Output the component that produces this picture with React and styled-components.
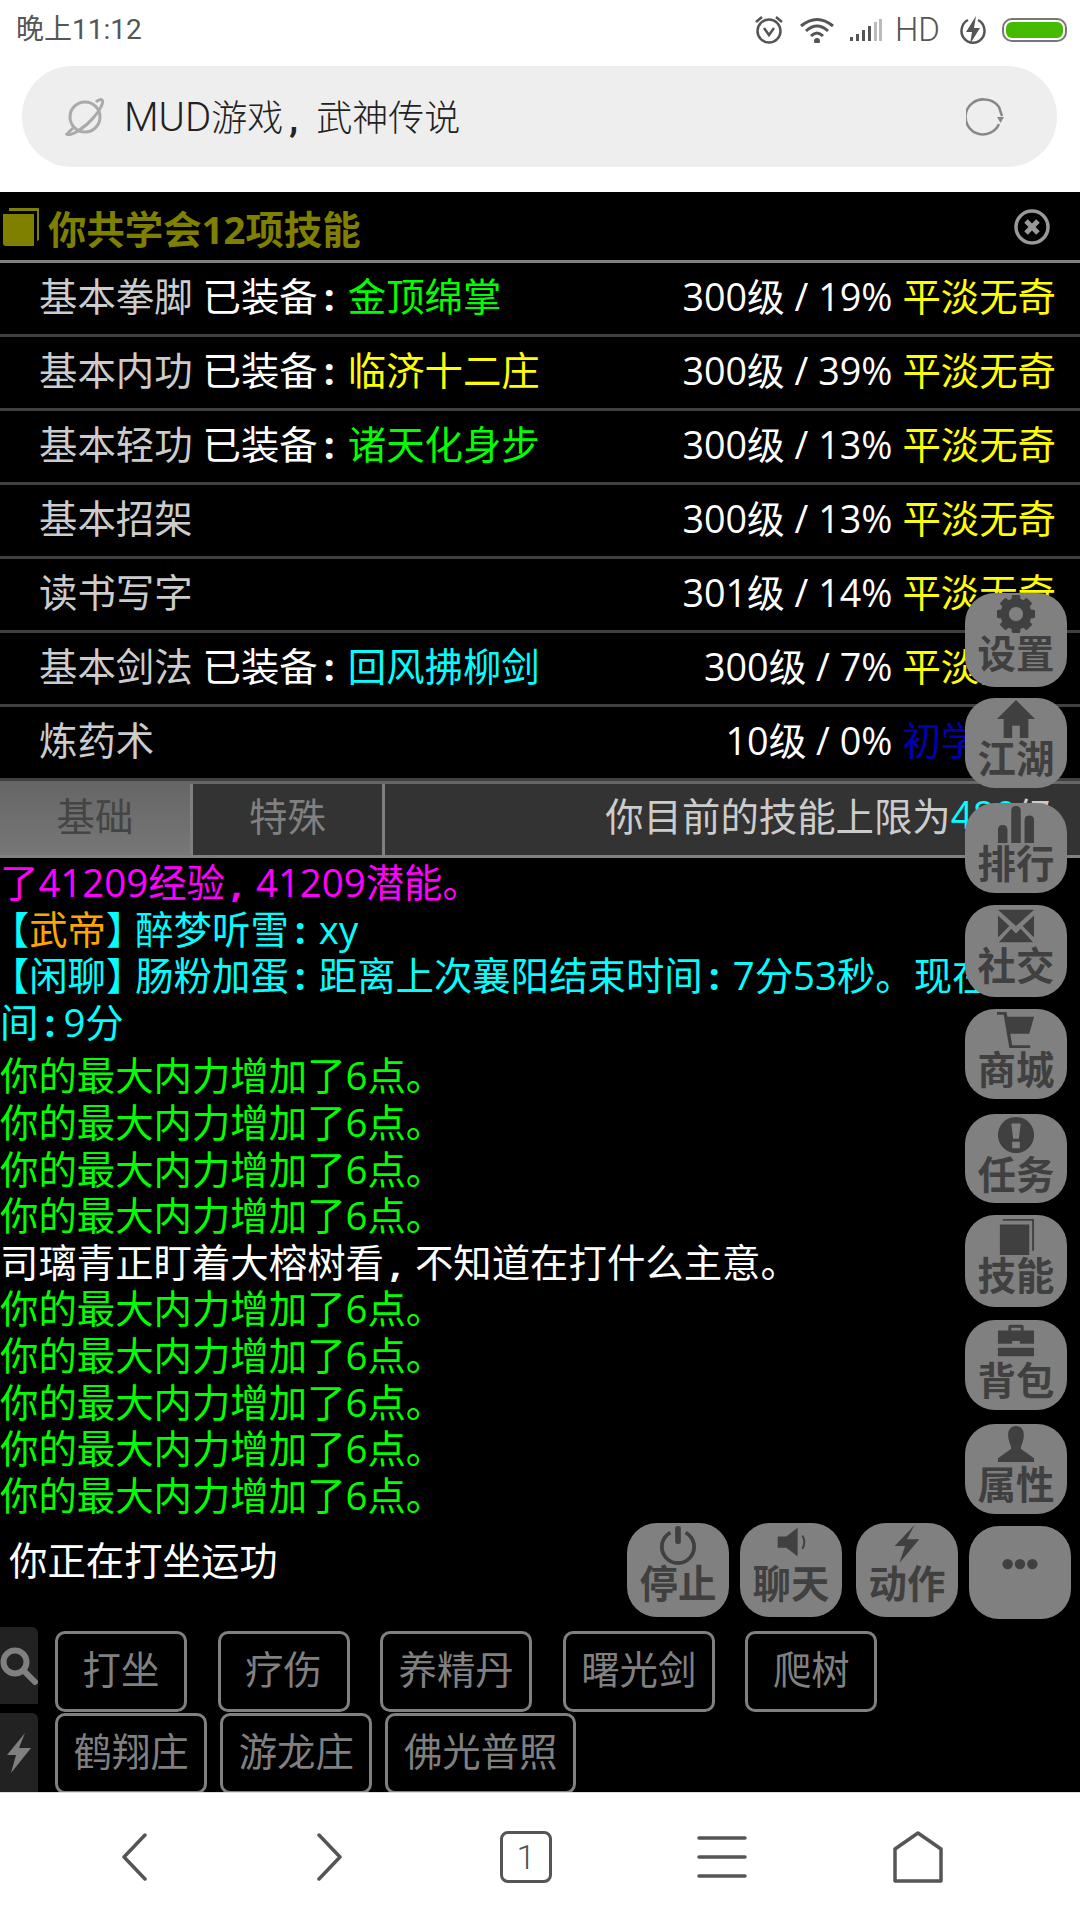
import React from 'react'
import styled, { createGlobalStyle } from 'styled-components'

const GlobalStyle = createGlobalStyle`
html, body {
  margin: 0;
  padding: 0;
  background: #fff;
}
* {
  box-sizing: border-box;
}
body {
  font-family: "Open Sans", "Noto Sans CJK SC", sans-serif;
}
`

const Page = styled.div`
width: 1080px;
height: 1920px;
display: flex;
flex-direction: column;
overflow: hidden;
`

const StatusBar = styled.div`
height: 66px;
display: flex;
align-items: center;
justify-content: space-between;
padding: 0 13px 7px 16px;
color: #555;
`
const Clock = styled.div`
font-family: Roboto, "Noto Sans CJK SC", sans-serif;
font-size: 28px;
font-weight: 400;
line-height: 54px;
`
const StatusIcons = styled.div`
display: flex;
align-items: center;
gap: 15px;
`
const HdLabel = styled.div`
font-family: Roboto, sans-serif;
font-size: 33px;
font-weight: 300;
color: #555;
line-height: 40px;
margin: 0 4px 0 -2px;
`

const UrlWrap = styled.div`
height: 126px;
padding: 0 23px 25px 22px;
`
const UrlBar = styled.div`
height: 101px;
border-radius: 50px;
background: #eee;
display: flex;
align-items: center;
padding: 0 53px 0 43px;
`
const UrlText = styled.div`
flex: 1;
margin-left: 19px;
padding-bottom: 4px;
font-family: Roboto, "Noto Sans CJK SC", sans-serif;
font-size: 36px;
font-weight: 300;
color: #222;
`
const UrlLatin = styled.span`
font-size: 40px;
`

const Game = styled.div`
position: relative;
flex: 1;
background: #000;
overflow: hidden;
font-size: 38.4px;
color: #fff;
`

const Header = styled.div`
height: 71px;
border-bottom: 3px solid #808080;
display: flex;
align-items: center;
padding: 2px 30px 0 3px;
`
const Title = styled.div`
flex: 1;
margin-left: 9px;
color: #808000;
font-weight: 700;
white-space: nowrap;
`

const SkillRow = styled.div`
height: 74px;
border-bottom: 3px solid #404040;
display: flex;
align-items: center;
justify-content: space-between;
padding: 0 24px 9px 39px;
white-space: nowrap;
`
const SkillName = styled.span`
color: #ccc;
`
const Equipped = styled.span`
color: ${props => props.$color};
`
const StatText = styled.span`
font-size: 37.7px;
`
const Narrow = styled.span`
display: inline-block;
width: ${props => props.$w || 30}px;
padding-left: 6px;
font-weight: 700;
`

const TabBar = styled.div`
height: 77px;
border-top: 3px solid #666;
border-bottom: 3px solid #808080;
display: flex;
background: #333;
`
const Tab = styled.div`
width: ${props => props.$width}px;
border-right: 3px solid #808080;
display: flex;
align-items: center;
justify-content: center;
padding-bottom: 12px;
color: ${props => (props.$active ? '#444' : '#808080')};
background: ${props => (props.$active ? 'linear-gradient(#666, #777)' : '#333')};
`
const LimitText = styled.div`
flex: 1;
display: flex;
align-items: center;
justify-content: flex-end;
padding: 0 25px 12px 0;
color: #ccc;
white-space: pre;
`
const Cyan = styled.span`
color: #0ff;
`

const Log = styled.div`
height: 660px;
padding-top: 1px;
line-height: 46.6px;
`
const LogLine = styled.div`
color: ${props => props.$color};
margin-top: ${props => props.$gap || 0}px;
`
const Orange = styled.span`
color: #ffa500;
`
const Bracket = styled.span`
font-feature-settings: "halt";
margin-left: ${props => props.$left || 0}px;
margin-right: ${props => props.$right || 0}px;
`

const Working = styled.div`
height: 109px;
padding: 18px 0 0 9px;
line-height: 48px;
`

const Actions = styled.div`
display: flex;
height: ${props => props.$height}px;
overflow: hidden;
`
const SideTab = styled.div`
width: 38px;
height: ${props => props.$height}px;
flex-shrink: 0;
background: #222;
border-radius: 0 6px 0 0;
display: flex;
align-items: center;
justify-content: center;
`
const ActionList = styled.div`
display: flex;
margin-left: 17px;
gap: ${props => props.$gap}px;
padding-top: ${props => props.$top}px;
`
const ActionButton = styled.div`
min-width: 132px;
height: 81px;
padding: 0 15.5px 10px;
border: 3px solid #808080;
border-radius: 10px;
display: flex;
align-items: center;
justify-content: center;
color: #808080;
white-space: nowrap;
`

const SideMenu = styled.div`
position: absolute;
top: 401px;
right: 13px;
display: flex;
flex-direction: column;
`
const BottomMenu = styled.div`
position: absolute;
top: 1331px;
left: 627px;
display: flex;
align-items: flex-start;
`
const MenuButton = styled.div`
width: 102px;
height: ${props => props.$height}px;
margin-top: ${props => props.$top || 0}px;
margin-left: ${props => props.$left || 0}px;
background: #808080;
border-radius: 30px;
color: #404040;
padding-top: 2px;
display: flex;
flex-direction: column;
align-items: center;
font-size: 38.4px;
font-weight: 700;
line-height: 40px;
white-space: nowrap;
`
const MenuIcon = styled.svg`
width: 38px;
height: 38px;
flex-shrink: 0;
fill: currentColor;
overflow: visible;
`

const Nav = styled.div`
height: 128px;
border-top: 1px solid #ddd;
background: #fff;
display: grid;
grid-template-columns: repeat(5, 196px);
padding-left: 36px;
align-items: center;
justify-items: center;
`
const TabCount = styled.div`
width: 52px;
height: 52px;
border: 3px solid #555;
border-radius: 8px;
display: flex;
align-items: center;
justify-content: center;
font-family: Roboto, sans-serif;
font-weight: 300;
font-size: 34px;
color: #555;
`

const Cog = () => {
    const teeth = [0, 45, 90, 135, 180, 225, 270, 315]
    return (
        <MenuIcon viewBox="0 0 40 40">
            <circle cx="20" cy="20" r="12" fill="none" stroke="currentColor" strokeWidth="9" />
            {teeth.map(a => <rect key={a} x="15.5" y="0" width="9" height="9" rx="1.5" transform={`rotate(${a} 20 20)`} />)}
        </MenuIcon>
    )
}
const Home = () => (
    <MenuIcon viewBox="0 0 40 40">
        <path d="M20 0 40 20H33V40H24V27H16V40H7V20H0Z" />
    </MenuIcon>
)
const Bars = () => (
    <MenuIcon viewBox="0 0 40 40">
        <path d="M1 40V26q0-5 5-5t5 5V40ZM15 40V6q0-5 5-5t5 5V40ZM29 40V16q0-5 5-5t5 5V40Z" />
    </MenuIcon>
)
const Mail = () => (
    <MenuIcon viewBox="0 0 40 40">
        <path d="M1 3H39L20 20ZM1 9 13 20 1 32ZM39 9 27 20 39 32ZM2 37 15 23 20 28 25 23 38 37Z" />
    </MenuIcon>
)
const Cart = () => (
    <MenuIcon viewBox="0 0 40 40">
        <path d="M0 1H10L11 6H39L34 24H14L16 36H35V39H13L7 4H0Z" />
    </MenuIcon>
)
const Alert = () => (
    <MenuIcon viewBox="0 0 40 40">
        <path fillRule="evenodd" d="M20 1a19 19 0 1 0 .01 0ZM15 8H25L23 24H17ZM16 27H24V34H16Z" />
    </MenuIcon>
)
const Book = () => (
    <MenuIcon viewBox="0 0 40 40">
        <path d="M6 2H39V35L37 36V4H6ZM3 8H34V40H3Z" />
    </MenuIcon>
)
const Case = () => (
    <MenuIcon viewBox="0 0 40 40">
        <path fillRule="evenodd" d="M14 3H26Q28 3 28 5V9H39V23H24V20H16V23H1V9H12V5Q12 3 14 3ZM15 6V9H25V6ZM1 27H39V36H1Z" />
    </MenuIcon>
)
const User = () => (
    <MenuIcon viewBox="0 0 40 40">
        <path d="M20 0C27 0 29 6 28 13 27 18 25 21 25 24L39 34V38H1V34L15 24C15 21 13 18 12 13 11 6 13 0 20 0Z" />
    </MenuIcon>
)
const Power = () => (
    <MenuIcon viewBox="0 0 40 40">
        <path d="M12 8A17 17 0 1 0 28 8" fill="none" stroke="currentColor" strokeWidth="4" />
        <rect x="17" y="1" width="6" height="19" rx="2.5" />
    </MenuIcon>
)
const Sound = () => (
    <MenuIcon viewBox="0 0 40 40">
        <path d="M6 12H15L27 3V33L15 24H6Z" />
        <path d="M32 11Q36 18 32 25" fill="none" stroke="currentColor" strokeWidth="2" />
    </MenuIcon>
)
const Bolt = () => (
    <MenuIcon viewBox="0 0 40 40">
        <path d="M28 0 20 15H33L12 40 18 22H7Z" />
    </MenuIcon>
)
const Dots = () => (
    <MenuIcon viewBox="0 0 40 40">
        <circle cx="7" cy="38" r="5.5" />
        <circle cx="20" cy="38" r="5.5" />
        <circle cx="33" cy="38" r="5.5" />
    </MenuIcon>
)

const sideItems = [
    { label: '设置', icon: <Cog />, height: 94, top: 0 },
    { label: '江湖', icon: <Home />, height: 90, top: 11 },
    { label: '排行', icon: <Bars />, height: 90, top: 15 },
    { label: '社交', icon: <Mail />, height: 92, top: 12 },
    { label: '商城', icon: <Cart />, height: 90, top: 12 },
    { label: '任务', icon: <Alert />, height: 89, top: 15 },
    { label: '技能', icon: <Book />, height: 92, top: 12 },
    { label: '背包', icon: <Case />, height: 90, top: 13 },
    { label: '属性', icon: <User />, height: 90, top: 14 },
]
const bottomItems = [
    { label: '停止', icon: <Power />, height: 94, top: 0, left: 0 },
    { label: '聊天', icon: <Sound />, height: 94, top: 0, left: 11 },
    { label: '动作', icon: <Bolt />, height: 94, top: 0, left: 14 },
    { label: '', icon: <Dots />, height: 93, top: 3, left: 11 },
]

const skills = [
    { name: '基本拳脚', equip: '金顶绵掌', color: '#0f0', stat: '300级 / 19%', level: '平淡无奇', levelColor: '#ff0' },
    { name: '基本内功', equip: '临济十二庄', color: '#ff0', stat: '300级 / 39%', level: '平淡无奇', levelColor: '#ff0' },
    { name: '基本轻功', equip: '诸天化身步', color: '#0f0', stat: '300级 / 13%', level: '平淡无奇', levelColor: '#ff0' },
    { name: '基本招架', stat: '300级 / 13%', level: '平淡无奇', levelColor: '#ff0' },
    { name: '读书写字', stat: '301级 / 14%', level: '平淡无奇', levelColor: '#ff0' },
    { name: '基本剑法', equip: '回风拂柳剑', color: '#0ff', stat: '300级 / 7%', level: '平淡无奇', levelColor: '#ff0' },
    { name: '炼药术', stat: '10级 / 0%', level: '初学乍练', levelColor: '#0000b0' },
]

const gain = '你的最大内力增加了6点。'

export default () => {
    return (
        <Page>
            <GlobalStyle />
            <StatusBar>
                <Clock>晚上11:12</Clock>
                <StatusIcons>
                    <svg width="30" height="30" viewBox="0 0 30 30" fill="none" stroke="#555" strokeWidth="2.5">
                        <circle cx="15" cy="16" r="11.5" />
                        <path d="M10 13l5 7 5-7M2 7l6-5M28 7l-6-5" />
                    </svg>
                    <svg width="36" height="26" viewBox="0 0 36 26" fill="none" stroke="#555" strokeWidth="3">
                        <path d="M2 9Q18-4 34 9M7 14Q18 4 29 14M12 19Q18 13 24 19" />
                        <circle cx="18" cy="24" r="1.5" fill="#555" />
                    </svg>
                    <svg width="32" height="22" viewBox="0 0 32 22" fill="#555">
                        <path d="M0 22V18H3V22ZM6 22V15H9V22ZM12 22V11H15V22ZM18 22V7H21V22Z" />
                        <path d="M24 22V3H27V22ZM29 22V0H32V22Z" fill="#bbb" />
                    </svg>
                    <HdLabel>HD</HdLabel>
                    <svg width="28" height="30" viewBox="0 0 28 30" fill="none">
                        <path d="M9 5A11.5 12 0 1 0 19 5" stroke="#555" strokeWidth="2.5" />
                        <path d="M17 1 7 17h6l-2 12 10-16h-6z" fill="#555" />
                    </svg>
                    <svg width="65" height="24" viewBox="0 0 65 24">
                        <rect x="1" y="1" width="63" height="22" rx="9" fill="none" stroke="#777" strokeWidth="2" />
                        <rect x="4" y="4" width="57" height="16" rx="6" fill="#44bb00" />
                    </svg>
                </StatusIcons>
            </StatusBar>
            <UrlWrap>
                <UrlBar>
                    <svg width="40" height="38" viewBox="0 0 40 38" fill="none" stroke="#aaa" strokeWidth="3">
                        <circle cx="20" cy="19" r="15" />
                        <path d="M8 30C3 35 1 37 2 36 5 39 20 30 29 19 36 11 39 4 37 2 36 1 33 2 31 4" />
                    </svg>
                    <UrlText><UrlLatin>MUD</UrlLatin>游戏<Narrow $w={33}>,</Narrow>武神传说</UrlText>
                    <svg width="38" height="38" viewBox="0 0 38 38" fill="none" stroke="#888" strokeWidth="2.5">
                        <path d="M33 26A17.5 17.5 0 1 1 19 1.5Q28 2 33 9L36 18" />
                        <path d="M31 19h7l-3.500 6z" fill="#888" stroke="none" />
                    </svg>
                </UrlBar>
            </UrlWrap>
            <Game>
                <Header>
                    <svg width="36" height="38" viewBox="0 0 36 38" fill="#808000">
                        <path d="M6 0H36V32L34 33V3H6ZM0 6H31V38H3Q0 38 0 35Z" />
                    </svg>
                    <Title>你共学会12项技能</Title>
                    <svg width="36" height="38" viewBox="0 0 36 38" fill="none" stroke="#999">
                        <circle cx="18" cy="19" r="16" strokeWidth="3.500" />
                        <path d="M12 13 24 25M24 13 12 25" strokeWidth="5" />
                    </svg>
                </Header>
                {skills.map(s => (
                    <SkillRow key={s.name}>
                        <div>
                            <SkillName>{s.name}</SkillName>
                            {s.equip && <> 已装备<Narrow>:</Narrow><Equipped $color={s.color}>{s.equip}</Equipped></>}
                        </div>
                        <div><StatText>{s.stat}</StatText> <Equipped $color={s.levelColor}>{s.level}</Equipped></div>
                    </SkillRow>
                ))}
                <TabBar>
                    <Tab $width={193} $active>基础</Tab>
                    <Tab $width={192}>特殊</Tab>
                    <LimitText>你目前的技能上限为<Cyan>480</Cyan>级</LimitText>
                </TabBar>
                <Log>
                    <LogLine $color="#f0f">了41209经验<Narrow $w={31}>,</Narrow>41209潜能。</LogLine>
                    <LogLine $color="#0ff"><Bracket $left={10}>【</Bracket><Orange>武帝</Orange><Bracket $right={10}>】</Bracket>醉梦听雪<Narrow>:</Narrow>xy</LogLine>
                    <LogLine $color="#0ff"><Bracket $left={10}>【</Bracket>闲聊<Bracket $right={10}>】</Bracket>肠粉加蛋<Narrow>:</Narrow>距离上次襄阳结束时间<Narrow>:</Narrow>7分53秒。现在时<br />间<Narrow $w={25}>:</Narrow>9分</LogLine>
                    <LogLine $color="#0f0" $gap={7}>{gain}</LogLine>
                    <LogLine $color="#0f0">{gain}</LogLine>
                    <LogLine $color="#0f0">{gain}</LogLine>
                    <LogLine $color="#0f0">{gain}</LogLine>
                    <LogLine $color="#fff">司璃青正盯着大榕树看<Narrow $w={31}>,</Narrow>不知道在打什么主意。</LogLine>
                    <LogLine $color="#0f0">{gain}</LogLine>
                    <LogLine $color="#0f0">{gain}</LogLine>
                    <LogLine $color="#0f0">{gain}</LogLine>
                    <LogLine $color="#0f0">{gain}</LogLine>
                    <LogLine $color="#0f0">{gain}</LogLine>
                </Log>
                <Working>你正在打坐运功</Working>
                <Actions $height={86}>
                    <SideTab $height={77}>
                        <svg width="38" height="38" viewBox="0 0 38 38" fill="none" stroke="#808080">
                            <circle cx="15" cy="15" r="11.500" strokeWidth="6" />
                            <path d="M24 24 35 35" strokeWidth="6" strokeLinecap="round" />
                        </svg>
                    </SideTab>
                    <ActionList $gap={30.5} $top={4}>
                        <ActionButton>打坐</ActionButton>
                        <ActionButton>疗伤</ActionButton>
                        <ActionButton>养精丹</ActionButton>
                        <ActionButton>曙光剑</ActionButton>
                        <ActionButton>爬树</ActionButton>
                    </ActionList>
                </Actions>
                <Actions $height={79}>
                    <SideTab $height={79}>
                        <svg width="26" height="40" viewBox="0 0 26 40" fill="#808080">
                            <path d="M19 0 13 15H25L5 40 10 22H1Z" />
                        </svg>
                    </SideTab>
                    <ActionList $gap={13} $top={0}>
                        <ActionButton>鹤翔庄</ActionButton>
                        <ActionButton>游龙庄</ActionButton>
                        <ActionButton>佛光普照</ActionButton>
                    </ActionList>
                </Actions>
                <SideMenu>
                    {sideItems.map(b => (
                        <MenuButton key={b.label} $height={b.height} $top={b.top}>
                            {b.icon}
                            {b.label}
                        </MenuButton>
                    ))}
                </SideMenu>
                <BottomMenu>
                    {bottomItems.map(b => (
                        <MenuButton key={b.left + b.label} $height={b.height} $top={b.top} $left={b.left}>
                            {b.icon}
                            {b.label}
                        </MenuButton>
                    ))}
                </BottomMenu>
            </Game>
            <Nav>
                <svg width="26" height="48" viewBox="0 0 26 48" fill="none" stroke="#555" strokeWidth="3.500" strokeLinecap="round" strokeLinejoin="round">
                    <path d="M24 2 3 24 24 46" />
                </svg>
                <svg width="26" height="48" viewBox="0 0 26 48" fill="none" stroke="#555" strokeWidth="3.500" strokeLinecap="round" strokeLinejoin="round">
                    <path d="M2 2 23 24 2 46" />
                </svg>
                <TabCount>1</TabCount>
                <svg width="50" height="42" viewBox="0 0 50 42" fill="none" stroke="#555" strokeWidth="3.500" strokeLinecap="round">
                    <path d="M2 2H48M2 21H48M2 40H48" />
                </svg>
                <svg width="50" height="52" viewBox="0 0 50 52" fill="none" stroke="#555" strokeWidth="3.500" strokeLinejoin="round">
                    <path d="M25 2 48 18V50H2V18Z" />
                </svg>
            </Nav>
        </Page>
    )
}
